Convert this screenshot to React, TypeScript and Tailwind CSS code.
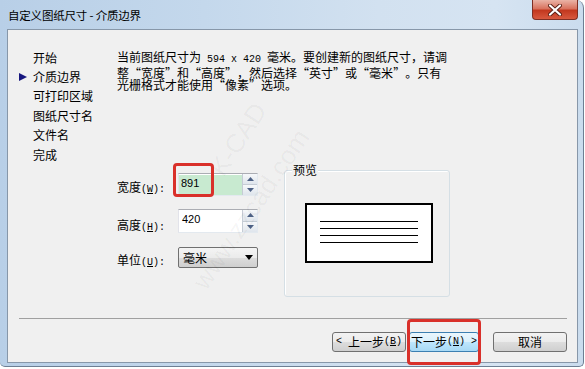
import React from "react";

const M = ({ children }: { children: React.ReactNode }) => (
  <span className="[font-family:'Liberation_Mono',monospace] text-[10px]">{children}</span>
);
const L = () => <span className="inline-block w-[12px] text-right">“</span>;
const R = () => <span className="inline-block w-[12px] text-left">”</span>;

function Spin() {
  return (
    <div className="flex flex-col w-[15px] h-full border-l border-[#c5ccd5]">
      <div className="flex-1 flex items-center justify-center border-b border-[#c5ccd5] bg-[linear-gradient(#f6f8fa,#dfe5ec)]">
        <svg width="7" height="4" viewBox="0 0 7 4"><polygon points="0,4 3.5,0 7,4" fill="#4d6185" /></svg>
      </div>
      <div className="flex-1 flex items-center justify-center bg-[linear-gradient(#f6f8fa,#dfe5ec)]">
        <svg width="7" height="4" viewBox="0 0 7 4"><polygon points="0,0 7,0 3.5,4" fill="#4d6185" /></svg>
      </div>
    </div>
  );
}

export default function App() {
  const navItems = ["开始", "介质边界", "可打印区域", "图纸尺寸名", "文件名", "完成"];
  return (
    <div className="relative w-[585px] h-[369px] bg-white overflow-hidden [font-family:'Noto_Sans_CJK_SC',sans-serif] text-black">
      <div className="w-[584px] h-[367px] flex flex-col border-r border-b border-[#6d7f93] rounded-tr-[8px] rounded-b-[5px] bg-[linear-gradient(90deg,#b8cfe7_0%,#c4d8ec_35%,#d2e1f0_65%,#d6e4f2_85%,#cadcee_100%)]">
        {/* title bar */}
        <div className="h-[29px] flex items-start justify-between">
          <div className="pl-[8px] pt-[8px] text-[11.5px] leading-[14px] tracking-[-0.2px]">自定义图纸尺寸 - 介质边界</div>
          <div className="mr-[5px] w-[46px] h-[20px] rounded-b-[4px] border border-t-0 border-[#7e2f24] bg-[linear-gradient(#eab3a6_0%,#d9735f_45%,#c2381f_55%,#d8593f_100%)] flex items-center justify-center">
            <svg width="14" height="12" viewBox="0 0 14 12">
              <path d="M2 1.5 L12 10.5 M12 1.5 L2 10.5" stroke="#5a1f15" strokeWidth="4" strokeLinecap="round" />
              <path d="M2 1.5 L12 10.5 M12 1.5 L2 10.5" stroke="#ffffff" strokeWidth="2.2" strokeLinecap="round" />
            </svg>
          </div>
        </div>
        {/* content */}
        <div className="relative ml-[7px] mr-[5px] mb-[3px] h-[334px] border border-[#8797a9] bg-[#f0f0f0] flex flex-col overflow-hidden">
          <div className="h-[288px] flex text-[12px]">
            <div className="w-[109px] pl-[11px] pt-[18px] flex flex-col">
              {navItems.map((t, i) => (
                <div key={t} className="flex items-center h-[19.4px]">
                  <div className="w-[14px] flex items-center">
                    {i === 1 && (
                      <svg width="8" height="8" viewBox="0 0 8 8"><polygon points="0,0 8,4 0,8" fill="#16167e" /></svg>
                    )}
                  </div>
                  <span className="leading-[12px]">{t}</span>
                </div>
              ))}
            </div>
            <div className="flex-1 flex flex-col pt-[21px]">
              <p className="h-[38px] leading-[12.5px] whitespace-nowrap">
                当前图纸尺寸为<M>{" 594 x 420 "}</M>毫米。要创建新的图纸尺寸，请调<br />
                整<L />宽度<R />和<L />高度<R />，然后选择<L />英寸<R />或<L />毫米<R />。只有<br />
                光栅格式才能使用<L />像素<R />选项。
              </p>
              <div className="mt-[81px] flex">
                <div className="w-[167px] flex flex-col">
                  <div className="mt-[3px] h-[23px] flex">
                    <div className="w-[61px] mt-[8px] leading-[12px]">宽度<M>(<u>W</u>):</M></div>
                    <div className="w-[80px] h-full flex border border-[#abadb3] border-l-[#e2e3ea] border-r-[#e3e9ef] border-b-[#e3e9ef] bg-white">
                      <div className="flex-1 mt-[1px] bg-[#c8ead0] pl-[2px] pt-[2px] text-[11px] leading-[13px] [font-family:'Liberation_Sans',sans-serif]">891</div>
                      <Spin />
                    </div>
                  </div>
                  <div className="mt-[13px] h-[24px] flex">
                    <div className="w-[61px] mt-[10px] leading-[12px]">高度<M>(<u>H</u>):</M></div>
                    <div className="w-[80px] h-full flex border border-[#abadb3] border-l-[#e2e3ea] border-r-[#e3e9ef] border-b-[#e3e9ef] bg-white">
                      <div className="flex-1 pl-[3px] pt-[3px] text-[11px] leading-[13px] [font-family:'Liberation_Sans',sans-serif]">420</div>
                      <Spin />
                    </div>
                  </div>
                  <div className="mt-[14px] h-[21px] flex">
                    <div className="w-[61px] mt-[7px] leading-[12px]">单位<M>(<u>U</u>):</M></div>
                    <div className="w-[80px] h-full flex items-center justify-between border border-[#707070] rounded-[2px] bg-[linear-gradient(#f4f4f4_0%,#ebebeb_50%,#dddddd_51%,#cfcfcf_100%)] pl-[4px] pr-[4px]">
                      <span className="leading-[12px]">毫米</span>
                      <svg width="8" height="5" viewBox="0 0 8 5"><polygon points="0,0 8,0 4,5" fill="#000" /></svg>
                    </div>
                  </div>
                </div>
                <div className="relative w-[166px] h-[127px] border border-[#d5dfe5] rounded-[3px] shadow-[inset_1px_1px_0_#ffffff] flex flex-col">
                  <span className="absolute -top-[7px] left-[7px] px-[1px] bg-[#f0f0f0] leading-[12px]">预览</span>
                  <div className="ml-[20px] mt-[32px] w-[128px] h-[60px] border-2 border-black bg-white flex flex-col">
                    <div className="ml-[13px] mt-[16px] w-[98px] flex flex-col gap-[6px]">
                      <div className="h-px bg-black" />
                      <div className="h-px bg-black" />
                      <div className="h-px bg-black" />
                      <div className="h-px bg-black" />
                    </div>
                  </div>
                </div>
              </div>
            </div>
          </div>
          <div className="ml-[11px] mr-[10px] h-px bg-[#a0a0a0]" />
          <div className="flex justify-end pr-[10px] pt-[13px] text-[12px]">
            <div className="w-[74px] h-[20px] flex items-center justify-center border border-[#707070] rounded-[3px] bg-[linear-gradient(#f2f2f2_0%,#ebebeb_50%,#dddddd_51%,#cfcfcf_100%)] leading-[12px] whitespace-nowrap">
              <M>{"<\u00a0"}</M>上一步<M>(<u>B</u>)</M>
            </div>
            <div className="ml-[3px] w-[70px] h-[20px] flex items-center justify-center border border-[#3c7fb1] rounded-[3px] bg-[linear-gradient(#eaf6fd_0%,#d9f0fc_50%,#bee6fd_51%,#a7d9f5_100%)] leading-[12px] whitespace-nowrap">
              下一步<M>(<u>N</u>){"\u00a0>"}</M>
            </div>
            <div className="ml-[14px] w-[74px] h-[20px] flex items-center justify-center border border-[#707070] rounded-[3px] bg-[linear-gradient(#f2f2f2_0%,#ebebeb_50%,#dddddd_51%,#cfcfcf_100%)] leading-[12px]">
              取消
            </div>
          </div>
          {/* watermark */}
          <div className="pointer-events-none absolute left-[150px] top-[160px] -rotate-[56deg] text-[26px] text-[rgba(0,0,0,0.045)] whitespace-nowrap [font-family:'Liberation_Sans',sans-serif]">
            www.zzcad.com
          </div>
          <div className="pointer-events-none absolute left-[190px] top-[90px] -rotate-[57deg] text-[26px] text-[rgba(0,0,0,0.045)] whitespace-nowrap [font-family:'Liberation_Sans',sans-serif]">
            K-CAD
          </div>
        </div>
      </div>
      {/* annotation rectangles */}
      <div className="pointer-events-none absolute left-[173px] top-[163px] w-[41px] h-[34px] border-[3px] border-[#d9302a] rounded-[4px]" />
      <div className="pointer-events-none absolute left-[407px] top-[319px] w-[74px] h-[46px] border-[3px] border-[#d9302a] rounded-[4px]" />
    </div>
  );
}
